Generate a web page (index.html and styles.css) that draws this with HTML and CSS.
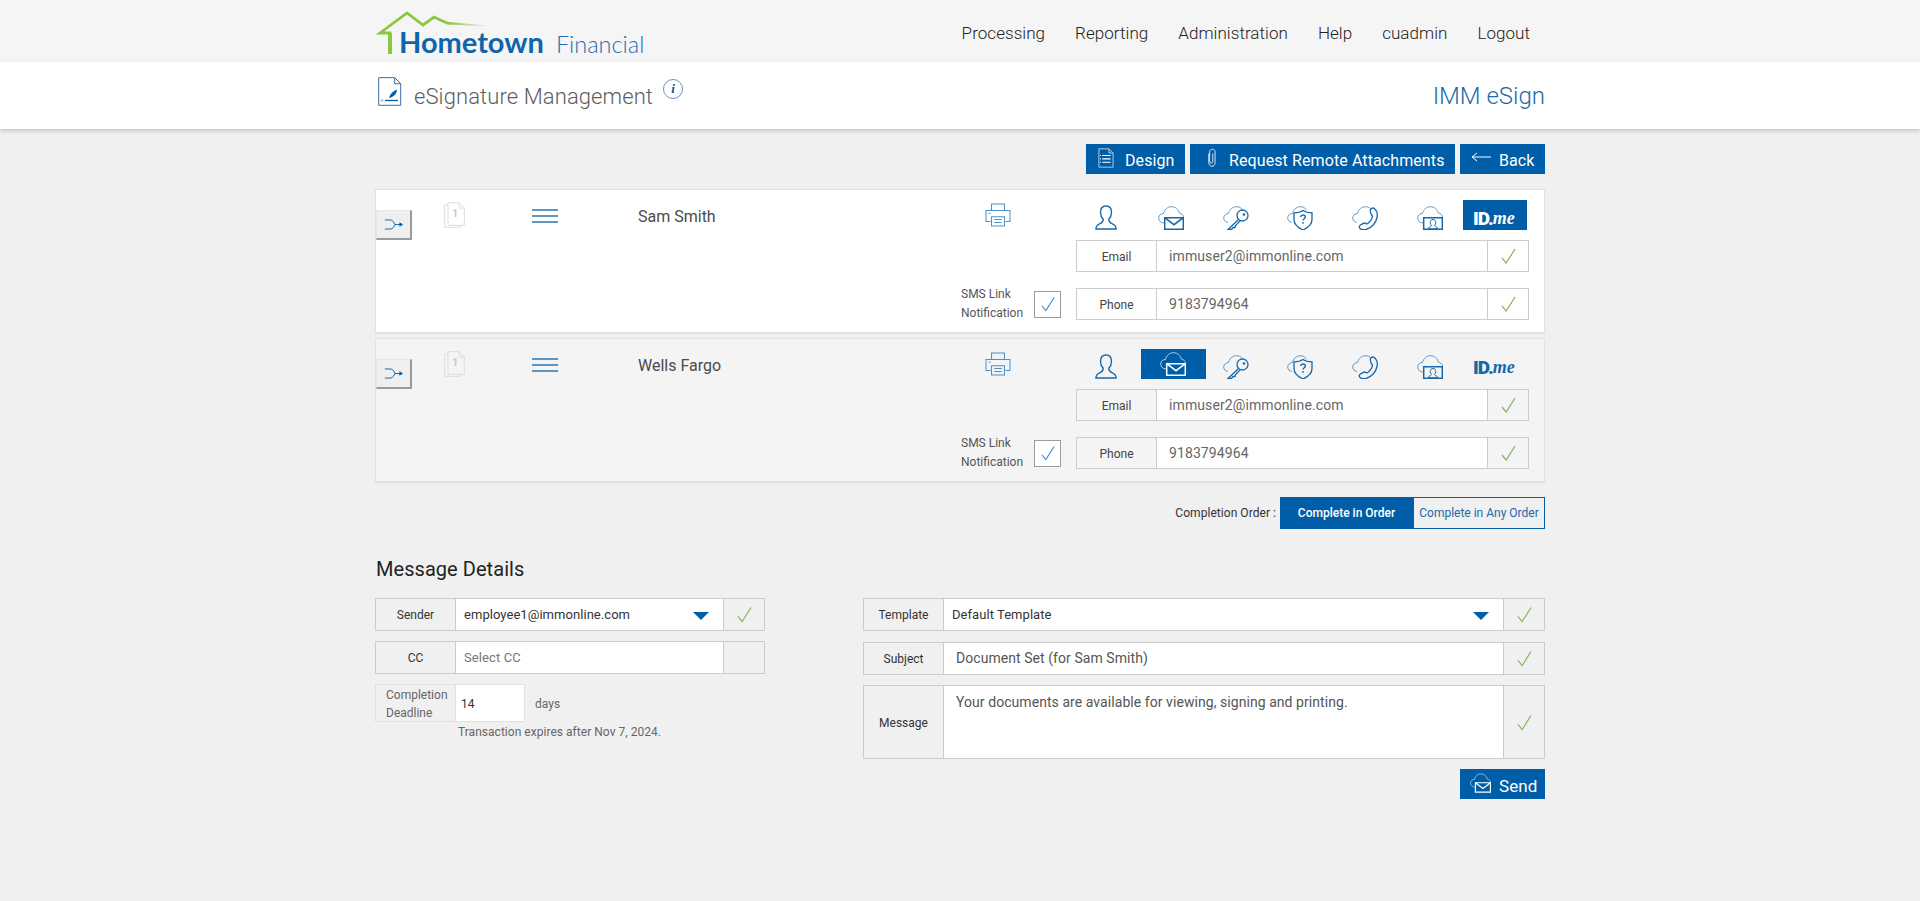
FILE: index.html
```html
<!DOCTYPE html>
<html lang="en">
<head>
<meta charset="utf-8">
<title>eSignature Management</title>
<link rel="stylesheet" href="styles.css">
</head>
<body>
<svg class="defs" width="0" height="0" aria-hidden="true">
  <defs>
    <linearGradient id="roofFade" gradientUnits="userSpaceOnUse" x1="72" y1="0" x2="112" y2="0">
      <stop offset="0" stop-color="#8cc63f"/><stop offset="1" stop-color="#8cc63f" stop-opacity=".1"/>
    </linearGradient>
    <symbol id="i-check" viewBox="0 0 16 17"><path d="M1 10.500 5.500 16 15 1" fill="none" stroke="currentColor" stroke-width="1.200"/></symbol>
    <symbol id="i-person" viewBox="0 0 24 27"><path d="M12 1C8 1 6 4 6 8c0 3 1 5.500 3 7.500 0 2-.8 3.500-3 4.500-3 1.200-5 2.500-5 6h22c0-3.500-2-4.800-5-6-2.200-1-3-2.500-3-4.500 2-2 3-4.500 3-7.500 0-4-2-7-6-7z" fill="none" stroke="currentColor" stroke-width="1.500"/></symbol>
    <symbol id="i-mail" viewBox="0 0 26 24"><path d="M6 17C3 17 .7 15 .7 12S3 7.500 5.500 7.500C6.500 3.500 9.500.7 13.500.7c4 0 7 2.800 7.800 6.300 2.500.5 4 2.200 4.200 4" fill="none" stroke="currentColor" stroke-opacity=".65"/><path d="M6.700 11.700h18.600v11.600H6.700zM6.700 11.700l9.300 7 9.300-7" fill="none" stroke="currentColor" stroke-width="1.500"/></symbol>
    <symbol id="i-key" viewBox="0 0 26 24"><path d="M5 16.500C2.500 16 .7 14.500.7 12S3 7.500 5.500 7.500C6.500 3.500 9.500.7 13.500.7c2.500 0 4.500 1 6 3" fill="none" stroke="currentColor" stroke-opacity=".65"/><circle cx="19.500" cy="9.500" r="5.500" fill="none" stroke="currentColor" stroke-width="1.300"/><circle cx="21" cy="8.500" r="1.300" fill="currentColor"/><path d="M15.500 13.500 5 23.500h3.500l1.500-2h2l.5-2 5-5" fill="none" stroke="currentColor" stroke-width="1.300"/></symbol>
    <symbol id="i-shield" viewBox="0 0 26 24"><path d="M5 16.500C2.500 16 .7 14.500.7 12S3 7.500 5.500 7.500C6.500 3.500 9.500.7 13.500.7c2.500 0 4.500 1 6 3.500" fill="none" stroke="currentColor" stroke-opacity=".65"/><path d="M16 4.500c2.500 1.800 5.500 2.300 9 2.300v6.700c0 4.500-3.500 8-9 10.500C10.500 21.500 7 18 7 13.500V6.800c3.500 0 6.500-.5 9-2.300z" fill="none" stroke="currentColor" stroke-width="1.300"/><path d="M13.500 11c.3-1.300 1.200-2 2.500-2 1.400 0 2.300.9 2.300 2 0 1.700-2.300 1.800-2.300 3.600M16 16v1.800" fill="none" stroke="currentColor" stroke-width="1.400"/></symbol>
    <symbol id="i-phone" viewBox="0 0 26 24"><path d="M5 16.500C2.500 16 .7 14.500.7 12S3 7.500 5.500 7.500C6.500 3.500 9.500.7 13.500.7c2 0 3.800.7 5.300 2" fill="none" stroke="currentColor" stroke-opacity=".65"/><path d="M19 3c1-1 2.300-1.300 3.300-.5 2.500 2 3.500 5 2.700 9-1 5.500-5.500 10.500-11 12-3 .6-5.500.2-6.500-1.800-.5-1 0-2 1-2.700 1.500-1 3.300-2 4.300-2s1.200 1 2.200.8c2.300-1 5-4.500 5.500-7.300 0-1-1-1.300-1.300-2.300-.5-1-1-3.700-.7-5z" fill="none" stroke="currentColor" stroke-width="1.300"/></symbol>
    <symbol id="i-idcard" viewBox="0 0 26 24"><path d="M6 17C3 17 .7 15 .7 12S3 7.500 5.500 7.500C6.500 3.500 9.500.7 13.500.7c4 0 7 2.800 7.800 6.300 2.500.5 4 2.200 4.200 4" fill="none" stroke="currentColor" stroke-opacity=".65"/><path d="M6.700 11.700h18.600v11.600H6.700z" fill="none" stroke="currentColor" stroke-width="1.500"/><path d="M16 13.500c-1.800 0-2.800 1.300-2.800 3 0 1.300.5 2.200 1.300 2.900 0 .9-1.300 1.300-2.800 2.100v1.300h8.600v-1.300c-1.500-.8-2.800-1.200-2.800-2.100.8-.7 1.300-1.600 1.300-2.900 0-1.700-1-3-2.800-3z" fill="none" stroke="currentColor"/></symbol>
    <symbol id="i-printer" viewBox="0 0 28 26"><path d="M7 8V1h14v7M6 20H1V8h26v12h-5M7 15h14v10H7z" fill="none" stroke="currentColor" stroke-width="1.100"/><path d="M10 18h8M10 21h8M4 11h2" fill="none" stroke="currentColor" stroke-width="1.100"/></symbol>
    <symbol id="i-docs" viewBox="0 0 21 26"><path d="M4 .7h11l5.300 5.300v17.300H4zM15 .7V6h5.300M4 3H.7v22.300h15.600v-2" fill="none" stroke="currentColor"/></symbol>
    <symbol id="i-menu" viewBox="0 0 26 14"><path d="M0 1h26M0 7h26M0 13h26" stroke="currentColor" stroke-width="1.500"/></symbol>
    <symbol id="i-route" viewBox="0 0 22 12"><path d="M1 1h6c3 0 4 3 5 5-1 2-2 5-5 5H1" fill="none" stroke="currentColor"/><path d="M12 6h6" stroke="currentColor"/><path d="M17 3.500 21 6l-4 2.500z" fill="currentColor"/></symbol>
  </defs>
</svg>

<header class="topbar">
  <div class="wrap topbar-inner">
    <div class="logo">
      <svg class="logo-roof" width="112" height="46" viewBox="0 0 112 46"><path d="M15 45V24H5L32 4l16 12 11-8 13 6" fill="none" stroke="#8cc63f" stroke-width="2.800"/><path d="M15 45V24" stroke="#8cc63f" stroke-width="4"/><path d="M72 12.700 112 16.500V17.300L72 15.500z" fill="url(#roofFade)"/></svg>
      <span class="logo-main">Hometown</span><span class="logo-sub">Financial</span>
    </div>
    <nav class="nav">
      <a>Processing</a><a>Reporting</a><a>Administration</a><a>Help</a><a>cuadmin</a><a>Logout</a>
    </nav>
  </div>
</header>

<section class="band">
  <div class="wrap band-inner">
    <svg class="band-icon" width="24" height="29" viewBox="0 0 24 29"><path d="M.7.700h16l6 6v21.600H.7zM16.700.700v6h6" fill="none" stroke="#3a6ea8"/><path d="M7 23.500h13" stroke="#005da8" stroke-width="1.300"/><path d="M3 22.500l2 2m0-2-2 2" stroke="#3a6ea8" stroke-width=".7"/><path d="M11 21c1-4 4-7 8-8.500 0 3.500-3 7.500-8 8.500z" fill="#005da8"/></svg>
    <h1 class="band-title">eSignature Management</h1>
    <span class="info">i</span>
    <div class="band-right">IMM eSign</div>
  </div>
</section>

<main class="wrap">
  <div class="actions">
    <button class="btn btn-design"><svg width="16" height="20" viewBox="0 0 19 24"><path d="M1 1h12l5 5v17H1zM13 1v5h5" fill="none" stroke="#cfe1f2"/><path d="M5 9h10M5 13h10M5 17h10" stroke="#fff" stroke-width="1.300"/><path d="M2.500 9h1M2.500 13h1M2.500 17h1" stroke="#fff" stroke-width="1.300"/></svg>Design</button>
    <button class="btn btn-attach"><svg width="10" height="20" viewBox="0 0 11 20"><path d="M3 5v10c0 5.500 7 5.500 7 0V3C10-.500 4-.500 4 3v11c0 2 3.500 2 3.500 0V5" fill="none" stroke="#e4f0fa"/></svg>Request Remote Attachments</button>
    <button class="btn btn-back"><svg width="20" height="10" viewBox="0 0 20 10"><path d="M20 5H1M6 1 1 5l5 4" fill="none" stroke="#fff"/></svg>Back</button>
  </div>

  <article class="card">
    <div class="c-handle"><button class="handle"><svg width="20" height="11"><use href="#i-route"/></svg></button></div>
    <div class="c-doc"><svg width="21" height="26"><use href="#i-docs"/></svg><span class="doc-num">1</span></div>
    <div class="c-menu"><svg width="26" height="14"><use href="#i-menu"/></svg></div>
    <div class="c-name">Sam Smith</div>
    <div class="c-opts">
      <svg class="printer" width="26" height="24"><use href="#i-printer"/></svg>
      <div class="sms"><span class="sms-text">SMS Link Notification</span><span class="sms-box"><svg width="14" height="22"><use href="#i-check"/></svg></span></div>
    </div>
    <div class="c-auth">
      <div class="tiles">
        <span class="tile"><svg width="22" height="25"><use href="#i-person"/></svg></span>
        <span class="tile"><svg width="26" height="24"><use href="#i-mail"/></svg></span>
        <span class="tile"><svg width="26" height="24"><use href="#i-key"/></svg></span>
        <span class="tile"><svg width="26" height="24"><use href="#i-shield"/></svg></span>
        <span class="tile"><svg width="26" height="24"><use href="#i-phone"/></svg></span>
        <span class="tile"><svg width="26" height="24"><use href="#i-idcard"/></svg></span>
        <span class="tile tile-on idme">ID.<i>me</i></span>
      </div>
      <div class="field f-email"><span class="f-label">Email</span><span class="f-value">immuser2@immonline.com</span><span class="f-check"><svg width="15" height="16"><use href="#i-check"/></svg></span></div>
      <div class="field f-phone"><span class="f-label">Phone</span><span class="f-value">9183794964</span><span class="f-check"><svg width="15" height="16"><use href="#i-check"/></svg></span></div>
    </div>
  </article>

  <article class="card card-alt">
    <div class="c-handle"><button class="handle"><svg width="20" height="11"><use href="#i-route"/></svg></button></div>
    <div class="c-doc"><svg width="21" height="26"><use href="#i-docs"/></svg><span class="doc-num">1</span></div>
    <div class="c-menu"><svg width="26" height="14"><use href="#i-menu"/></svg></div>
    <div class="c-name">Wells Fargo</div>
    <div class="c-opts">
      <svg class="printer" width="26" height="24"><use href="#i-printer"/></svg>
      <div class="sms"><span class="sms-text">SMS Link Notification</span><span class="sms-box"><svg width="14" height="22"><use href="#i-check"/></svg></span></div>
    </div>
    <div class="c-auth">
      <div class="tiles">
        <span class="tile"><svg width="22" height="25"><use href="#i-person"/></svg></span>
        <span class="tile tile-on"><svg width="26" height="24"><use href="#i-mail"/></svg></span>
        <span class="tile"><svg width="26" height="24"><use href="#i-key"/></svg></span>
        <span class="tile"><svg width="26" height="24"><use href="#i-shield"/></svg></span>
        <span class="tile"><svg width="26" height="24"><use href="#i-phone"/></svg></span>
        <span class="tile"><svg width="26" height="24"><use href="#i-idcard"/></svg></span>
        <span class="tile idme">ID.<i>me</i></span>
      </div>
      <div class="field f-email"><span class="f-label">Email</span><span class="f-value">immuser2@immonline.com</span><span class="f-check"><svg width="15" height="16"><use href="#i-check"/></svg></span></div>
      <div class="field f-phone"><span class="f-label">Phone</span><span class="f-value">9183794964</span><span class="f-check"><svg width="15" height="16"><use href="#i-check"/></svg></span></div>
    </div>
  </article>

  <div class="order">
    <span class="order-label">Completion Order :</span>
    <span class="order-on">Complete in Order</span>
    <span class="order-off">Complete in Any Order</span>
  </div>

  <h2 class="section-title">Message Details</h2>

  <div class="details">
    <div class="details-left">
      <div class="row"><span class="r-label">Sender</span><span class="r-value r-dark"><span class="r-grow">employee1@immonline.com</span><span class="caret"></span></span><span class="r-check"><svg width="15" height="17"><use href="#i-check"/></svg></span></div>
      <div class="row"><span class="r-label">CC</span><span class="r-value r-muted">Select CC</span><span class="r-check"></span></div>
      <div class="deadline">
        <span class="d-label">Completion Deadline</span><span class="d-input">14</span><span class="d-unit">days</span>
      </div>
      <p class="expires">Transaction expires after Nov 7, 2024.</p>
    </div>
    <div class="details-right">
      <div class="row"><span class="r-label">Template</span><span class="r-value r-dark"><span class="r-grow">Default Template</span><span class="caret"></span></span><span class="r-check"><svg width="15" height="17"><use href="#i-check"/></svg></span></div>
      <div class="row row-subject"><span class="r-label">Subject</span><span class="r-value r-text">Document Set (for Sam Smith)</span><span class="r-check"><svg width="15" height="17"><use href="#i-check"/></svg></span></div>
      <div class="row row-msg"><span class="r-label">Message</span><span class="r-value r-text r-top">Your documents are available for viewing, signing and printing.</span><span class="r-check"><svg width="15" height="17"><use href="#i-check"/></svg></span></div>
      <div class="send-row"><button class="btn btn-send"><svg width="21" height="20"><use href="#i-mail"/></svg>Send</button></div>
    </div>
  </div>
</main>
</body>
</html>
```

FILE: styles.css
```css
* { box-sizing: border-box; }
html, body { margin: 0; padding: 0; }
body { background: #f0f0f0; font-family: Roboto, "Liberation Sans", sans-serif; color: #444; min-height: 901px; }
.defs { position: absolute; }
.wrap { width: 1170px; margin: 0 auto; }

.topbar { height: 62px; background: #f5f5f5; }
.topbar-inner { display: flex; justify-content: space-between; height: 62px; }
.logo { position: relative; display: flex; align-items: baseline; padding: 26px 0 0 24px; font-family: Lato, sans-serif; color: #0f65ab; line-height: 32px; }
.logo-roof { position: absolute; left: 0; top: 9px; }
.logo-main { font-size: 29px; font-weight: 700; }
.logo-sub { font-size: 23.5px; font-weight: 300; margin-left: 12px; color: #1f6fb0; }
.nav { display: flex; gap: 30px; padding: 24px 15px 0 0; font-size: 17px; font-weight: 300; line-height: 19px; letter-spacing: .05px; color: #222; }

.band { height: 67px; background: #fff; box-shadow: 0 2px 4px rgba(0, 0, 0, .18); }
.band-inner { display: flex; align-items: flex-start; height: 67px; }
.band-icon { margin: 15px 0 0 3px; }
.band-title { margin: 20px 0 0 12px; font-size: 22px; font-weight: 300; line-height: 30px; letter-spacing: .1px; color: #5e5e5e; }
.info { width: 20px; height: 20px; margin: 17px 0 0 10px; border: 1px solid #6d94bd; border-radius: 50%; font: italic 700 13px/18px "Liberation Serif", serif; color: #0d4f8b; text-align: center; }
.band-right { margin: 19px 0 0 auto; font-size: 24px; font-weight: 300; line-height: 30px; color: #1a6aab; }

.actions { display: flex; justify-content: flex-end; gap: 5px; margin-top: 15px; height: 30px; }
.btn { display: flex; align-items: center; height: 30px; padding: 3px 0 0; border: 0; background: #005ea8; color: #fff; font: 400 16px Roboto, sans-serif; letter-spacing: .1px; }
.btn svg { margin-top: -5px; }
.btn-design { width: 99px; padding-left: 12px; gap: 11px; }
.btn-attach { width: 265px; padding-left: 16px; gap: 13px; }
.btn-back { width: 85px; padding-left: 11px; gap: 8px; }
.btn-back svg { margin-top: -7px; }

.card { display: grid; grid-template-columns: 68px 88px 107px 322px 115px 1fr; height: 144px; margin-top: 15px; background: #fff; border: 1px solid #e2e2e2; box-shadow: 0 1px 1px rgba(0, 0, 0, .06); }
.card-alt { margin-top: 5px; background: #f4f4f4; }
.c-handle { padding-top: 20px; }
.handle { display: flex; align-items: center; justify-content: center; width: 36px; height: 30px; padding: 0; border: 1px solid #e6e6e6; border-right: 2px solid #9b9b9b; border-bottom: 2px solid #9b9b9b; background: #efefef; color: #005ea8; }
.c-doc { position: relative; padding-top: 12px; color: #dcdcdc; }
.doc-num { position: absolute; left: 8px; top: 17px; font-size: 11px; font-weight: 700; line-height: 13px; color: #c9c9c9; }
.c-menu { padding-top: 18px; color: #2a74b4; }
.c-name { padding-top: 17px; margin-left: -1px; font-size: 16px; line-height: 20px; color: #4a4a4a; }
.c-opts { display: flex; flex-direction: column; justify-content: space-between; padding: 13px 0 9px; }
.printer { margin-left: 24px; color: #4a90c9; }
.sms { display: flex; align-items: center; }
.sms-text { width: 73px; font-size: 12px; line-height: 19px; color: #555; }
.sms-box { display: flex; align-items: center; justify-content: center; width: 27px; height: 27px; border: 1px solid #9d9d9d; background: #fff; color: #3f86c6; }

.c-auth { padding-top: 10px; }
.tiles { display: grid; grid-template-columns: repeat(7, 64.3px); height: 30px; margin-left: 1px; }
.tile { display: flex; align-items: flex-end; justify-content: center; padding-right: 4px; color: #1668ac; }
.tile:first-child { padding-right: 6px; }
.tile:nth-child(n+5) { padding-right: 2px; }
.tile-on { align-items: center; padding-right: 0; background: #005ea8; color: #fff; }
.idme { align-items: center; padding: 7px 0 0; font: 900 19px Roboto, sans-serif; letter-spacing: -1px; }
.idme i { font: italic 700 18px "Liberation Serif", serif; letter-spacing: 0; }

.field { display: flex; width: 453px; height: 32px; border: 1px solid #ccc; background: #fff; }
.f-email { margin-top: 10px; }
.f-phone { margin-top: 16px; }
.f-label { width: 80px; border-right: 1px solid #ccc; font-size: 12px; line-height: 32px; text-align: center; color: #444; }
.f-value { flex: 1; padding-left: 12px; font-size: 14px; line-height: 30px; letter-spacing: .1px; color: #666; }
.f-check { display: flex; align-items: center; justify-content: center; width: 41px; border-left: 1px solid #ccc; color: #7fae4f; }
.card-alt .f-label, .card-alt .f-check { background: #f4f4f4; }

.order { display: flex; justify-content: flex-end; align-items: center; height: 32px; margin-top: 15px; font-size: 12px; }
.order-label { margin-right: 4px; letter-spacing: .05px; color: #333; }
.order-on { width: 133px; height: 32px; background: #005ea8; color: #fff; font-weight: 500; line-height: 33px; text-align: center; }
.order-off { width: 132px; height: 32px; border: 1px solid #005ea8; color: #1a6aab; line-height: 31px; text-align: center; }

.section-title { margin: 28px 0 17px 1px; font-size: 20px; font-weight: 400; line-height: 24px; letter-spacing: .05px; color: #222; }

.details { display: flex; justify-content: space-between; align-items: flex-start; }
.details-left { display: flex; flex-direction: column; gap: 10px; width: 390px; }
.details-right { display: flex; flex-direction: column; gap: 10px; width: 682px; }
.row { display: flex; height: 33px; border: 1px solid #ccc; background: #fff; }
.row-subject { margin-top: 1px; }
.row-msg { height: 74px; }
.r-label { width: 80px; border-right: 1px solid #ccc; background: #f0f0f0; font-size: 12px; line-height: 33px; text-align: center; color: #333; }
.row-msg .r-label { line-height: 74px; }
.r-value { flex: 1; display: flex; align-items: center; padding: 0 8px; font-size: 13px; }
.r-dark { color: #333; letter-spacing: .05px; padding-bottom: 1px; }
.r-muted { color: #777; letter-spacing: .1px; padding-bottom: 1px; }
.r-text { color: #555; padding-left: 12px; font-size: 14px; letter-spacing: .06px; padding-bottom: 1px; }
.r-top { align-items: flex-start; padding-top: 8px; line-height: 17px; }
.r-grow { flex: 1; }
.caret { width: 0; height: 0; margin: 3px 6px 0 0; border-left: 8px solid transparent; border-right: 8px solid transparent; border-top: 8px solid #005ea8; }
.r-check { display: flex; align-items: center; justify-content: center; width: 41px; border-left: 1px solid #ccc; background: #f0f0f0; color: #85b25c; }

.deadline { display: flex; align-items: center; height: 38px; }
.d-label { width: 80px; height: 38px; padding: 1px 4px 0 10px; border: 1px solid #e2e2e2; border-right: 0; font-size: 12px; line-height: 18px; color: #666; }
.d-input { width: 70px; height: 38px; padding-left: 5px; border: 1px solid #e2e2e2; background: #fff; font-size: 12px; line-height: 38px; color: #333; }
.d-unit { margin: 2px 0 0 10px; font-size: 12px; color: #666; }
.expires { margin: -10px 0 0 83px; font-size: 12px; line-height: 20px; letter-spacing: .03px; color: #666; }

.send-row { display: flex; justify-content: flex-end; }
.btn-send { width: 85px; padding-left: 10px; gap: 8px; font-size: 17px; }
```
